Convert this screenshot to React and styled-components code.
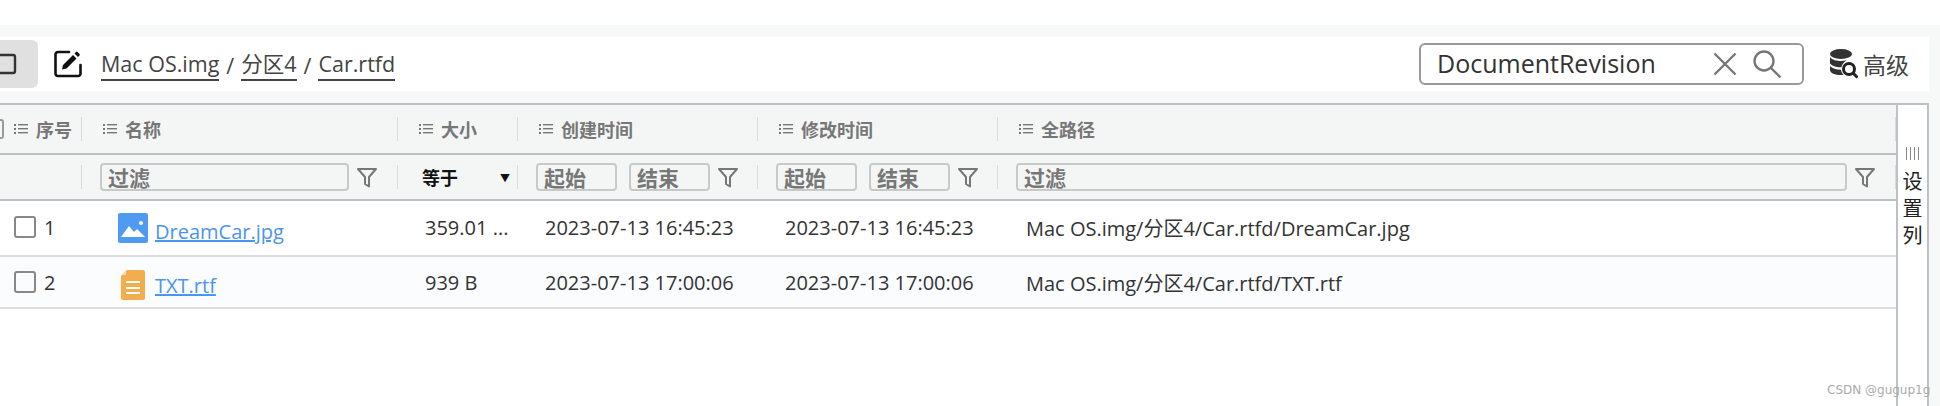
import styled, { createGlobalStyle } from "styled-components";

const GlobalStyle = createGlobalStyle`
    html, body {
        margin: 0;
        padding: 0;
        background: #fff;
        overflow: hidden;
    }
    * {
        box-sizing: border-box;
    }
`

const FONT = `"Open Sans", "Noto Sans CJK SC", sans-serif`

const COLUMNS = [
    { title: "序号", width: 82, filter: "none" },
    { title: "名称", width: 316, filter: "text" },
    { title: "大小", width: 120, filter: "select" },
    { title: "创建时间", width: 240, filter: "range" },
    { title: "修改时间", width: 240, filter: "range" },
    { title: "全路径", width: 898, filter: "text" },
]

const ROWS = [
    { id: 1, name: "DreamCar.jpg", size: "359.01 ...", created: "2023-07-13 16:45:23", modified: "2023-07-13 16:45:23", path: "Mac OS.img/分区4/Car.rtfd/DreamCar.jpg", type: "image" },
    { id: 2, name: "TXT.rtf", size: "939 B", created: "2023-07-13 17:00:06", modified: "2023-07-13 17:00:06", path: "Mac OS.img/分区4/Car.rtfd/TXT.rtf", type: "doc" },
]

function ListIcon () {
    return (
        <svg width="14" height="12" viewBox="0 0 14 12" fill="#777">
            <rect x="0" y="1" width="2" height="2"/>
            <rect x="0" y="5" width="2" height="2"/>
            <rect x="0" y="9" width="2" height="2"/>
            <rect x="4" y="1" width="10" height="1.4"/>
            <rect x="4" y="5" width="10" height="1.4"/>
            <rect x="4" y="9" width="10" height="1.4"/>
        </svg>
    )
}

function FunnelIcon () {
    return (
        <FunnelSvg width="20" height="21" viewBox="0 0 20 21" fill="none" stroke="#777" strokeWidth="2" strokeLinejoin="round">
            <path d="M1 2h18l-7 8v9.500l-4-2.500v-7z"/>
        </FunnelSvg>
    )
}

function ImageIcon () {
    return (
        <svg width="30" height="30" viewBox="0 0 30 30">
            <rect width="30" height="30" rx="2" fill="#4f9bf2"/>
            <circle cx="23" cy="10" r="2" fill="#fff"/>
            <path d="M3 24l8-11 5 6 3-3 8 8z" fill="#fff"/>
        </svg>
    )
}

function DocIcon () {
    return (
        <svg width="24" height="30" viewBox="0 0 24 30">
            <path d="M6 0h16a2 2 0 0 1 2 2v26a2 2 0 0 1-2 2H2a2 2 0 0 1-2-2V6z" fill="#f4ad4d"/>
            <path d="M1 5l4-4v4z" fill="#fbdcae"/>
            <rect x="5" y="11" width="14" height="2" fill="#fff"/>
            <rect x="5" y="17" width="14" height="2" fill="#fff"/>
            <rect x="5" y="22" width="14" height="2" fill="#fff"/>
        </svg>
    )
}

function App () {
    return (
        <>
            <GlobalStyle/>
            <TopStrip/>
            <Main>
                <Toolbar>
                    <ViewButton>
                        <svg width="38" height="48" viewBox="0 0 38 48" fill="none" stroke="#333" strokeWidth="2.4">
                            <rect x="-8" y="15" width="23" height="18" rx="2"/>
                        </svg>
                    </ViewButton>
                    <EditSvg width="28" height="28" viewBox="0 0 28 28" fill="none">
                        <path d="M15 2H4a2.500 2.500 0 0 0-2.500 2.500v19A2.500 2.500 0 0 0 4 26h20a2.500 2.500 0 0 0 2.500-2.500V15" stroke="#111" strokeWidth="2.600" strokeLinecap="round"/>
                        <path d="M8 19.500l1-4.500L19 5l3.500 3.500-10 10zM20.500 3.500L22 2a1 1 0 0 1 1.500 0l2 2a1 1 0 0 1 0 1.500L24 7z" fill="#111"/>
                    </EditSvg>
                    <Breadcrumb>
                        <Crumb>Mac OS.img</Crumb>
                        <Slash>/</Slash>
                        <Crumb>分区4</Crumb>
                        <Slash>/</Slash>
                        <Crumb>Car.rtfd</Crumb>
                    </Breadcrumb>
                    <SearchBox>
                        <SearchText>DocumentRevision</SearchText>
                        <svg width="24" height="24" viewBox="0 0 24 24" stroke="#777" strokeWidth="2.400" fill="none">
                            <path d="M1.500 1.500l21 21M22.500 1.500l-21 21"/>
                        </svg>
                        <svg width="30" height="30" viewBox="0 0 30 30" stroke="#777" strokeWidth="2.400" fill="none">
                            <circle cx="12" cy="12" r="9.500"/>
                            <path d="M19 19l9.500 9.500"/>
                        </svg>
                    </SearchBox>
                    <Advanced>
                        <svg width="28" height="30" viewBox="0 0 28 30" fill="#333">
                            <ellipse cx="11" cy="5" rx="11" ry="5"/>
                            <path d="M0 8c2 3 7 4 11 4 2 0 4-.2 6-.8-3 1.500-5 4-5.500 7C7 18.500 2 17 0 14.500z"/>
                            <path d="M0 17c2 2.500 6 3.500 11 3.800.3 2 1 3.500 2.500 5-1 .2-2 .2-2.500.2-6 0-11-2-11-5z"/>
                            <circle cx="19" cy="20" r="5.500" fill="none" stroke="#222" strokeWidth="3"/>
                            <path d="M23 24l4.500 4.500" stroke="#222" strokeWidth="3" fill="none"/>
                        </svg>
                        <span>高级</span>
                    </Advanced>
                </Toolbar>
                <TableArea>
                    <Table>
                        <HeadRow>
                            {COLUMNS.map((col, i) => (
                                <HeadCell key={col.title} $width={col.width} $first={i === 0}>
                                    {i === 0 && <CutCheckbox/>}
                                    <ListIcon/>
                                    <span>{col.title}</span>
                                </HeadCell>
                            ))}
                        </HeadRow>
                        <FilterRow>
                            {COLUMNS.map(col => (
                                <FilterCell key={col.title} $width={col.width}>
                                    {col.filter === "text" && <>
                                        <FilterInput $grow>过滤</FilterInput>
                                        <FunnelIcon/>
                                    </>}
                                    {col.filter === "select" && <>
                                        <SelectLabel>等于</SelectLabel>
                                        <Caret>▼</Caret>
                                    </>}
                                    {col.filter === "range" && <>
                                        <FilterInput>起始</FilterInput>
                                        <FilterInput>结束</FilterInput>
                                        <FunnelIcon/>
                                    </>}
                                </FilterCell>
                            ))}
                        </FilterRow>
                        {ROWS.map(row => {
                            const odd = row.id % 2 === 1
                            return (
                                <Row key={row.id} $odd={odd}>
                                    <IdCell>
                                        <Checkbox/>
                                        <span>{row.id}</span>
                                    </IdCell>
                                    <NameCell $odd={odd}>
                                        <IconSlot $low={row.type === "doc"}>{row.type === "image" ? <ImageIcon/> : <DocIcon/>}</IconSlot>
                                        <FileLink>{row.name}</FileLink>
                                    </NameCell>
                                    <TextCell $width={120} $left={27}>{row.size}</TextCell>
                                    <TextCell $width={240} $left={27}>{row.created}</TextCell>
                                    <TextCell $width={240} $left={27}>{row.modified}</TextCell>
                                    <TextCell $width={898} $left={28}>{row.path}</TextCell>
                                </Row>
                            )
                        })}
                    </Table>
                    <SettingsPanel>
                        <Bars/>
                        <span>设</span>
                        <span>置</span>
                        <span>列</span>
                    </SettingsPanel>
                </TableArea>
            </Main>
            <Watermark>CSDN @gugup1g</Watermark>
        </>
    )
}

const TopStrip = styled.div`
    height: 25px;
    background: #fff;
`

const Main = styled.div`
    height: 381px;
    padding-top: 12px;
    background: #f7f8f8;
    font-family: ${FONT};
`

const Toolbar = styled.div`
    width: 1929px;
    height: 54px;
    padding-top: 3px;
    padding-bottom: 3px;
    display: flex;
    align-items: center;
    background: #fff;
`

const ViewButton = styled.div`
    width: 38px;
    height: 48px;
    background: #e0e0e0;
    border-radius: 0 6px 6px 0;
    svg {
        display: block;
    }
`

const EditSvg = styled.svg`
    margin-left: 16px;
    flex-shrink: 0;
`

const Breadcrumb = styled.div`
    margin-left: 19px;
    margin-top: 2px;
    display: flex;
    align-items: center;
    font-size: 21.5px;
    color: #444;
`

const Crumb = styled.span`
    line-height: 30px;
    border-bottom: 2px solid #444;
`

const Slash = styled.span`
    margin: 0 7px;
`

const SearchBox = styled.div`
    margin-left: auto;
    width: 385px;
    height: 42px;
    padding: 0 20px 0 16px;
    display: flex;
    align-items: center;
    border: 2px solid #999;
    border-radius: 6px;
    background: #fff;
    svg:last-child {
        margin-left: 15px;
    }
`

const SearchText = styled.span`
    flex: 1;
    margin-top: -2px;
    font-size: 25px;
    color: #333;
    white-space: nowrap;
`

const Advanced = styled.div`
    width: 125px;
    padding-left: 26px;
    display: flex;
    align-items: center;
    gap: 5px;
    font-size: 23px;
    color: #444;
    svg {
        flex-shrink: 0;
    }
`

const TableArea = styled.div`
    width: 1929px;
    height: 303px;
    margin-top: 12px;
    display: flex;
    border-top: 2px solid #bcc1c5;
    border-right: 2px solid #bcc1c5;
    background: #fff;
`

const Table = styled.div`
    width: 1896px;
    flex-shrink: 0;
`

const HeadRow = styled.div`
    height: 50px;
    display: flex;
    align-items: center;
    background: #f4f6f6;
    border-bottom: 2px solid #bcc1c5;
`

const HeadCell = styled.div`
    width: ${({$width}) => $width}px;
    height: 24px;
    padding-left: ${({$first}) => $first ? 0 : 21}px;
    display: flex;
    align-items: center;
    gap: 8px;
    border-right: 1px solid #d9dbdb;
    font-size: 18px;
    font-weight: 700;
    color: #777;
`

const CutCheckbox = styled.div`
    width: 4px;
    height: 20px;
    margin-right: 2px;
    border: 2px solid #999;
    border-left: none;
    border-radius: 0 3px 3px 0;
`

const FilterRow = styled.div`
    height: 46px;
    display: flex;
    align-items: center;
    background: #f4f6f6;
    border-bottom: 2px solid #bcc1c5;
`

const FilterCell = styled.div`
    width: ${({$width}) => $width}px;
    height: 24px;
    padding-left: 18px;
    padding-right: 20px;
    display: flex;
    align-items: center;
    gap: 8px;
    border-right: 1px solid #d9dbdb;
`

const FilterInput = styled.div`
    ${({$grow}) => $grow ? "flex: 1;" : "width: 81px;"}
    height: 28px;
    padding-left: 6px;
    flex-shrink: 0;
    border: 2px solid #c8caca;
    border-radius: 4px;
    font-size: 21px;
    font-weight: 700;
    line-height: 27px;
    color: #777;
    & + & {
        margin-left: 4px;
    }
`

const FunnelSvg = styled.svg`
    flex-shrink: 0;
`

const SelectLabel = styled.span`
    margin-left: 6px;
    flex: 1;
    font-size: 18px;
    font-weight: 700;
    color: #111;
`

const Caret = styled.span`
    margin-right: -13px;
    font-size: 10px;
    color: #111;
`

const Row = styled.div`
    height: ${({$odd}) => $odd ? 56 : 52}px;
    padding-bottom: ${({$odd}) => $odd ? 2 : 0}px;
    display: flex;
    align-items: center;
    background: ${({$odd}) => $odd ? "#fff" : "#fbfcfe"};
    border-bottom: 2px solid #dcdde0;
    font-size: 20px;
    color: #333;
`

const IdCell = styled.div`
    width: 82px;
    padding-left: 14px;
    display: flex;
    align-items: center;
    gap: 8px;
`

const Checkbox = styled.div`
    width: 22px;
    height: 22px;
    border: 2px solid #888;
    border-radius: 3px;
`

const NameCell = styled.div`
    width: 316px;
    margin-top: ${({$odd}) => $odd ? 2 : 0}px;
    padding-left: 36px;
    display: flex;
    align-items: center;
`

const IconSlot = styled.div`
    width: 30px;
    height: 30px;
    margin-top: ${({$low}) => $low ? 6 : 0}px;
    display: flex;
    justify-content: center;
`

const FileLink = styled.a`
    margin-left: 7px;
    margin-top: 6px;
    font-size: 20px;
    color: #4a95ee;
    text-decoration: underline;
`

const TextCell = styled.div`
    width: ${({$width}) => $width}px;
    padding-left: ${({$left}) => $left}px;
    white-space: nowrap;
`

const SettingsPanel = styled.div`
    flex: 1;
    padding-top: 42px;
    display: flex;
    flex-direction: column;
    align-items: center;
    border-left: 2px solid #bcc1c5;
    font-size: 20px;
    line-height: 27px;
    color: #222;
`

const Bars = styled.div`
    width: 14px;
    height: 13px;
    margin-bottom: 8px;
    background: repeating-linear-gradient(90deg, #888 0 1px, transparent 1px 4px);
`

const Watermark = styled.div`
    position: absolute;
    top: 382px;
    left: 1827px;
    font-family: "DejaVu Sans", sans-serif;
    font-size: 12px;
    line-height: 16px;
    color: #aaa;
    white-space: nowrap;
`

export default App
